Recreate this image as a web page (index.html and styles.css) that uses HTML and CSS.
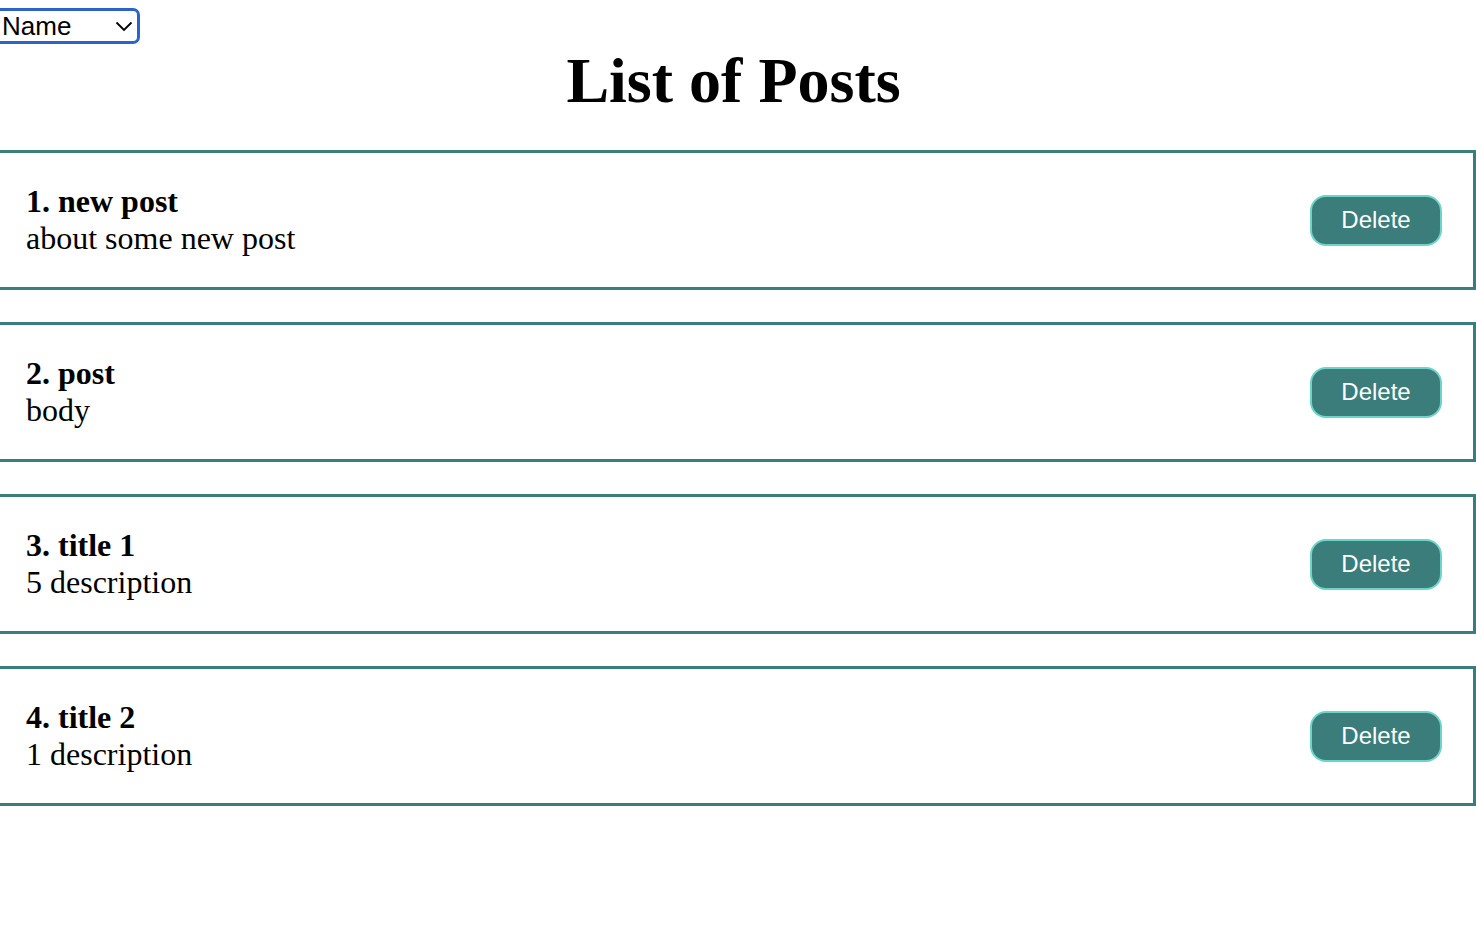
FILE: index.html
```html
<!DOCTYPE html>
<html lang="en">
<head>
<meta charset="utf-8">
<title>List of Posts</title>
<link rel="stylesheet" href="styles.css">
</head>
<body>
<div class="app">
  <div class="sort">
    <div class="select-wrap">
      <select class="select">
        <option>Name</option>
        <option>Description</option>
      </select>
      <svg class="chevron" width="18" height="11" viewBox="0 0 18 11"><path d="M1.5 1.5 L9 9 L16.5 1.5" fill="none" stroke="#000" stroke-width="1.8"/></svg>
    </div>
  </div>
  <h1 class="heading">List of Posts</h1>
  <div class="posts">
    <div class="post">
      <div class="post-content">
        <strong class="post-title">1. new post</strong>
        <div class="post-body">about some new post</div>
      </div>
      <button class="delete">Delete</button>
    </div>
    <div class="post">
      <div class="post-content">
        <strong class="post-title">2. post</strong>
        <div class="post-body">body</div>
      </div>
      <button class="delete">Delete</button>
    </div>
    <div class="post">
      <div class="post-content">
        <strong class="post-title">3. title 1</strong>
        <div class="post-body">5 description</div>
      </div>
      <button class="delete">Delete</button>
    </div>
    <div class="post">
      <div class="post-content">
        <strong class="post-title">4. title 2</strong>
        <div class="post-body">1 description</div>
      </div>
      <button class="delete">Delete</button>
    </div>
  </div>
</div>
</body>
</html>
```

FILE: styles.css
```css
html, body {
  margin: 0;
  padding: 0;
  background: #fff;
}
body {
  font-family: "Liberation Serif", "Times New Roman", serif;
  font-size: 32px;
  color: #000;
}
.app {
  padding-top: 8px;
}
.sort {
  display: flex;
}
.select-wrap {
  position: relative;
  width: 140px;
  height: 36px;
}
.select {
  display: block;
  appearance: none;
  -webkit-appearance: none;
  box-sizing: border-box;
  width: 140px;
  height: 36px;
  margin: 0;
  padding: 0 0 0 2px;
  border: 3px solid #2c62c9;
  border-left-width: 0;
  border-radius: 0 7px 7px 0;
  background: #fff;
  font-family: "Liberation Sans", Arial, sans-serif;
  font-size: 26px;
  color: #000;
  outline: none;
}
.chevron {
  position: absolute;
  left: 115px;
  top: 13px;
  pointer-events: none;
}
.heading {
  margin: 0 0 32px;
  padding-right: 9px;
  text-align: center;
  font-size: 64px;
  font-weight: bold;
}
.posts {
  display: flex;
  flex-direction: column;
  gap: 32px;
}
.post {
  display: flex;
  align-items: center;
  justify-content: space-between;
  border: 3px solid #3a7d7b;
  border-left: none;
  padding: 30px 31px 30px 26px;
}
.post-content {
  display: flex;
  flex-direction: column;
}
.post-title {
  font-weight: bold;
}
.delete {
  box-sizing: border-box;
  width: 132px;
  height: 51px;
  border: 2px solid #6dd5c8;
  border-radius: 16px;
  background: #3a7d7b;
  color: #fff;
  font-family: "Liberation Sans", Arial, sans-serif;
  font-size: 24px;
  padding: 0;
  cursor: pointer;
}
```
